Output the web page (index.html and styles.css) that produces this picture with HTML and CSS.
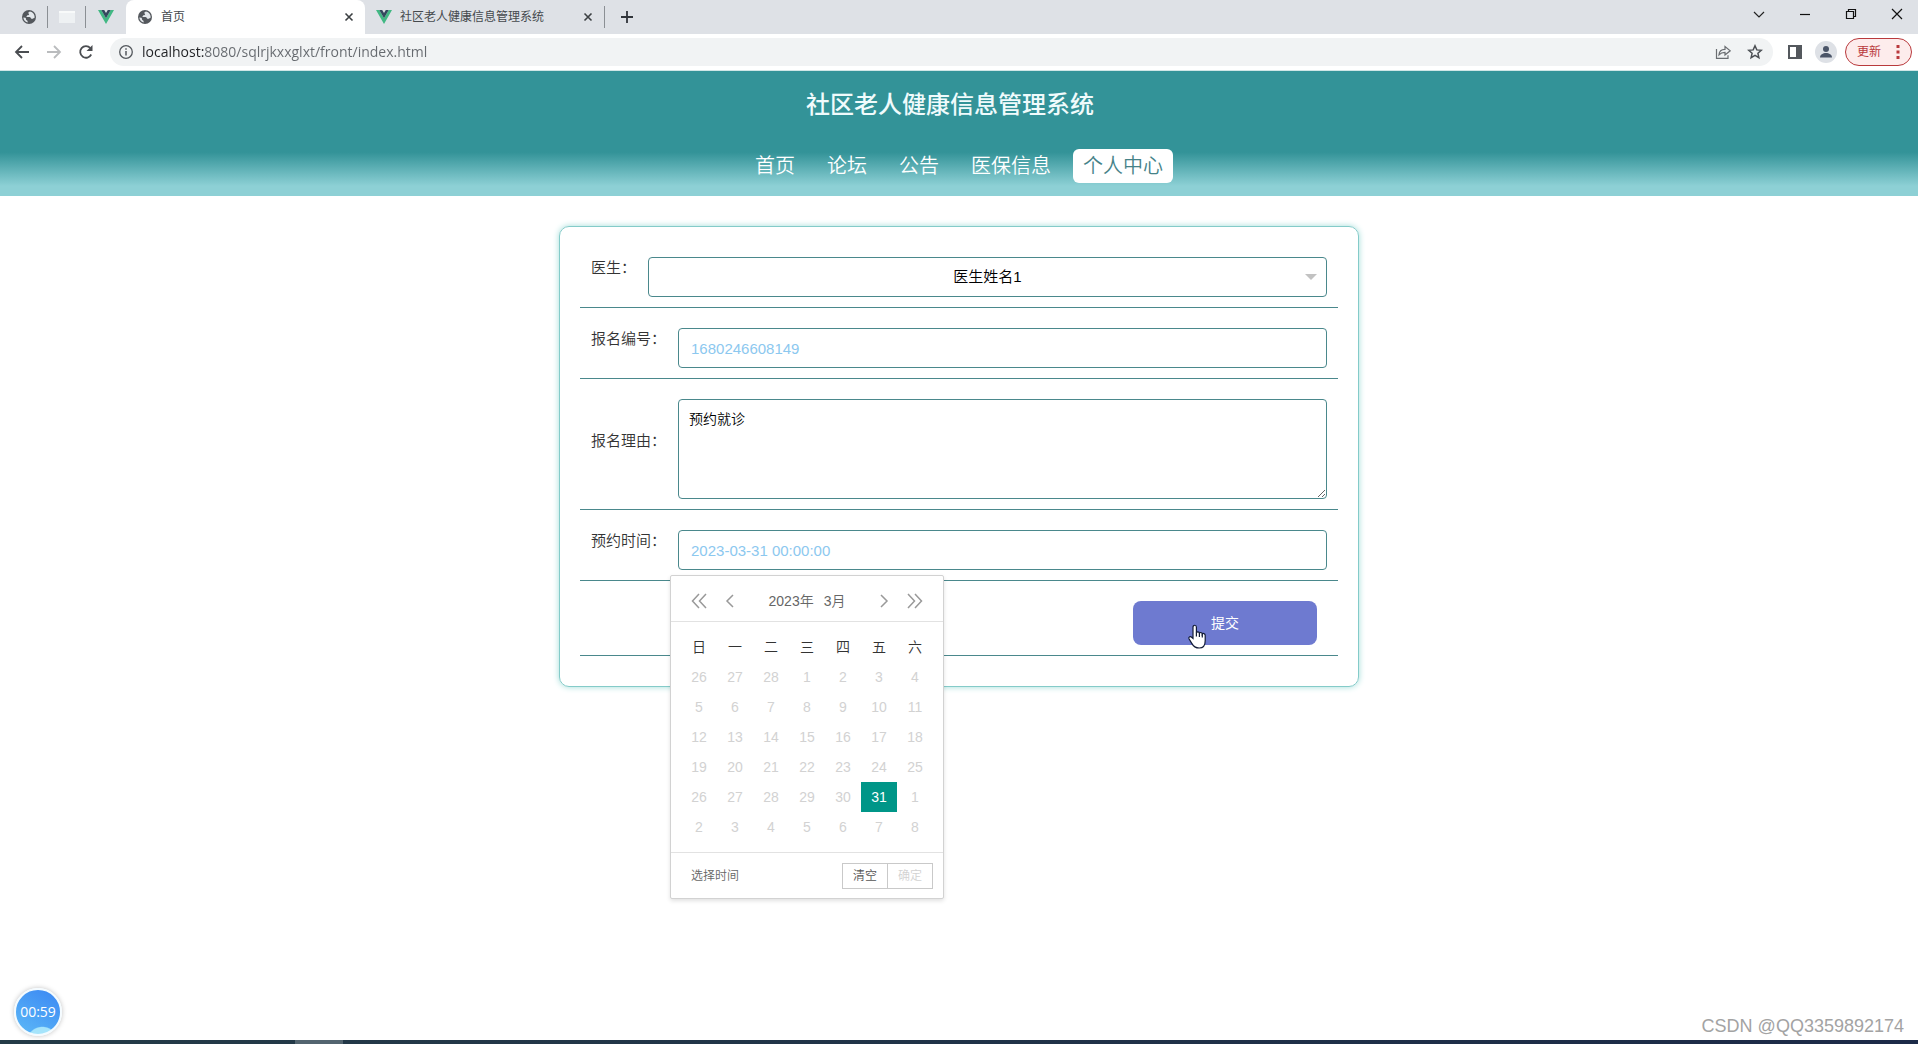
FILE: index.html
```html
<!DOCTYPE html>
<html lang="zh-CN">
<head>
<meta charset="utf-8">
<meta name="viewport" content="width=device-width, initial-scale=1">
<title>首页</title>
<link rel="stylesheet" href="styles.css">
</head>
<body>
<svg class="defs" width="0" height="0" aria-hidden="true">
  <symbol id="globe" viewBox="0 0 16 16">
    <circle cx="8" cy="8" r="7" fill="#54585d"/>
    <path d="M9 2.4c-1.600 .3-2.200 1.600-1.200 2.400.9.800-.2 1.500-1.300 1.500-.9 0-.3 1.500-1.400 1.700h3.400c1.500 0 1 1.900 2.500 1.900.9 0 1.100-.9 2.500-.8A5.800 5.800 0 0 0 9 2.400zM2.300 8.500c.3 2.400 1.900 4.400 4.300 5.100.2-1.300-.1-1.900-1-2.300-1-.5-.2-2-1.200-2.500z" fill="#e4e8ec"/>
  </symbol>
  <symbol id="vue" viewBox="0 0 16 16">
    <path d="M0 1h3.300L8 9.200 12.700 1H16L8 15z" fill="#41b883"/>
    <path d="M3.300 1h2.900L8 4.100 9.800 1h2.900L8 9.200z" fill="#34495e"/>
  </symbol>
  <symbol id="cross" viewBox="0 0 16 16">
    <path d="M4.500 4.500l7 7m0-7l-7 7" stroke="#3c4043" stroke-width="1.600" fill="none"/>
  </symbol>
</svg>

<header class="browser">
  <div class="tabs">
    <div class="pin"><svg class="i16"><use href="#globe"/></svg></div>
    <div class="pin"><svg class="i16" viewBox="0 0 16 16"><path d="M0 2h16v12H0z" fill="#eef1f3"/><path d="M0 2h16v2H0z" fill="#f8fafa"/></svg></div>
    <div class="pin last"><svg class="i16"><use href="#vue"/></svg></div>
    <div class="tab active">
      <svg class="i16"><use href="#globe"/></svg>
      <span class="name">首页</span>
      <button class="plain" aria-label="关闭"><svg class="i16"><use href="#cross"/></svg></button>
    </div>
    <div class="tab">
      <svg class="i16"><use href="#vue"/></svg>
      <span class="name">社区老人健康信息管理系统</span>
      <button class="plain" aria-label="关闭"><svg class="i16"><use href="#cross"/></svg></button>
    </div>
    <button class="plain new-tab" aria-label="新标签页"><svg class="i16" viewBox="0 0 16 16"><path d="M8 2v12M2 8h12" stroke="#30343a" stroke-width="1.800"/></svg></button>
    <div class="window-buttons">
      <button class="plain" aria-label="搜索标签页"><svg class="i16" viewBox="0 0 16 16"><path d="M3 6l5 5 5-5" fill="none" stroke="#222" stroke-width="1.200"/></svg></button>
      <button class="plain" aria-label="最小化"><svg class="i16" viewBox="0 0 16 16"><path d="M3 8.500h10" stroke="#111" stroke-width="1.200"/></svg></button>
      <button class="plain" aria-label="还原"><svg class="i16" viewBox="0 0 16 16"><path d="M3.500 5.500h7v7h-7zM5.500 5.500v-2h7v7h-2" fill="none" stroke="#111" stroke-width="1.200"/></svg></button>
      <button class="plain" aria-label="关闭窗口"><svg class="i16" viewBox="0 0 16 16"><path d="M3 3l10 10M13 3L3 13" stroke="#111" stroke-width="1.200"/></svg></button>
    </div>
  </div>
  <div class="toolbar">
    <button class="plain" aria-label="后退"><svg class="i16" viewBox="0 0 16 16"><path d="M15 8H2M8 2L2 8l6 6" fill="none" stroke="#4a4d51" stroke-width="1.800"/></svg></button>
    <button class="plain" aria-label="前进"><svg class="i16" viewBox="0 0 16 16"><path d="M1 8h13M8 2l6 6-6 6" fill="none" stroke="#babcbe" stroke-width="1.800"/></svg></button>
    <button class="plain" aria-label="重新加载"><svg class="i16" viewBox="0 0 16 16"><path d="M13.200 10.500A5.800 5.800 0 1 1 12.300 4" fill="none" stroke="#4a4d51" stroke-width="1.800"/><path d="M14.500 1v6h-6z" fill="#4a4d51"/></svg></button>
    <div class="address">
      <svg class="i16" viewBox="0 0 16 16"><circle cx="8" cy="8" r="6.300" fill="none" stroke="#54585d" stroke-width="1.300"/><path d="M8 7v4.500M8 4.300v1.500" stroke="#54585d" stroke-width="1.500"/></svg>
      <input class="url" type="text" aria-label="地址" value="localhost:8080/sqlrjkxxglxt/front/index.html">
      <button class="plain" aria-label="分享"><svg class="i16" viewBox="0 0 16 16"><path d="M1.500 5v9.300h11.500v-3" fill="none" stroke="#6a6d71" stroke-width="1.200"/><path d="M4 10.800c.2-3.600 2.500-5.400 6-5.500V2.500l5.200 4.300-5.200 4.200V8.300c-2.700 0-4.500.7-6 2.500z" fill="none" stroke="#6a6d71" stroke-width="1.200"/></svg></button>
      <button class="plain" aria-label="收藏"><svg class="i16" viewBox="0 0 16 16"><path d="M8 1.800l1.800 4.100 4.500.4-3.400 3 1 4.400L8 11.400l-3.900 2.300 1-4.400-3.400-3 4.500-.4z" fill="none" stroke="#4c4f54" stroke-width="1.500"/></svg></button>
    </div>
    <button class="plain" aria-label="侧边栏"><svg class="i16" viewBox="0 0 16 16"><path d="M1 1h14v14H1zM3 3v10h6V3z" fill="#54585d" fill-rule="evenodd"/></svg></button>
    <button class="plain avatar" aria-label="用户"><svg class="i16" viewBox="0 0 16 16"><circle cx="8" cy="5" r="3" fill="#4b5568"/><path d="M2 13.500c0-6 12-6 12 0z" fill="#4b5568"/></svg></button>
    <button class="update">更新<svg width="4" height="14" viewBox="0 0 4 14"><path d="M.5 0h3v3h-3zM.5 5.500h3v3h-3zM.5 11h3v3h-3z" fill="#b9393c"/></svg></button>
  </div>
</header>

<main class="page">
  <div class="banner">
    <h1>社区老人健康信息管理系统</h1>
    <nav>
      <a href="#home">首页</a>
      <a href="#forum">论坛</a>
      <a href="#notice">公告</a>
      <a href="#insurance">医保信息</a>
      <a href="#center" class="current">个人中心</a>
    </nav>
  </div>

  <form class="card">
    <div class="row">
      <label for="doctor">医生：</label>
      <div class="field">
        <select id="doctor"><option>医生姓名1</option></select>
        <svg class="caret" width="12" height="6" viewBox="0 0 12 6"><path d="M0 0h12L6 6z" fill="#c2c2c2"/></svg>
      </div>
    </div>
    <div class="row">
      <label for="number">报名编号：</label>
      <div class="field"><input id="number" type="text" value="1680246608149"></div>
    </div>
    <div class="row middle">
      <label for="reason">报名理由：</label>
      <div class="field"><textarea id="reason">预约就诊</textarea></div>
    </div>
    <div class="row">
      <label for="time">预约时间：</label>
      <div class="field">
        <input id="time" type="text" value="2023-03-31 00:00:00">
        <section class="calendar" aria-label="日期选择">
          <div class="cal-head">
            <button type="button" class="plain" aria-label="上一年"><svg class="i16" viewBox="0 0 16 16"><path d="M8 1L1.500 8 8 15M15 1L8.500 8l6.500 7" fill="none" stroke="#999" stroke-width="1.500"/></svg></button>
            <button type="button" class="plain" aria-label="上一月"><svg class="i16" viewBox="0 0 16 16"><path d="M11 2L5 8l6 6" fill="none" stroke="#999" stroke-width="1.500"/></svg></button>
            <div class="month"><span>2023年</span><span>3月</span></div>
            <button type="button" class="plain" aria-label="下一月"><svg class="i16" viewBox="0 0 16 16"><path d="M5 2l6 6-6 6" fill="none" stroke="#999" stroke-width="1.500"/></svg></button>
            <button type="button" class="plain" aria-label="下一年"><svg class="i16" viewBox="0 0 16 16"><path d="M1 1l6.500 7L1 15M8 1l6.500 7L8 15" fill="none" stroke="#999" stroke-width="1.500"/></svg></button>
          </div>
          <div class="cal-body">
            <table>
              <thead><tr><th>日</th><th>一</th><th>二</th><th>三</th><th>四</th><th>五</th><th>六</th></tr></thead>
              <tbody>
                <tr><td>26</td><td>27</td><td>28</td><td>1</td><td>2</td><td>3</td><td>4</td></tr>
                <tr><td>5</td><td>6</td><td>7</td><td>8</td><td>9</td><td>10</td><td>11</td></tr>
                <tr><td>12</td><td>13</td><td>14</td><td>15</td><td>16</td><td>17</td><td>18</td></tr>
                <tr><td>19</td><td>20</td><td>21</td><td>22</td><td>23</td><td>24</td><td>25</td></tr>
                <tr><td>26</td><td>27</td><td>28</td><td>29</td><td>30</td><td class="chosen">31</td><td>1</td></tr>
                <tr><td>2</td><td>3</td><td>4</td><td>5</td><td>6</td><td>7</td><td>8</td></tr>
              </tbody>
            </table>
          </div>
          <div class="cal-foot">
            <button type="button" class="plain pick">选择时间</button>
            <div class="pair">
              <button type="button">清空</button>
              <button type="button" disabled>确定</button>
            </div>
          </div>
        </section>
      </div>
    </div>
    <div class="row end">
      <button type="button" class="submit">提交
        <svg class="pointer" width="20" height="26" viewBox="0 0 20 26"><path d="M6 14.500V3.200c0-2.600 3.400-2.600 3.400 0v5.600c.2-1.300 2.900-1.200 3 .4.400-1.100 2.900-.9 2.900.8.500-.9 2.900-.7 2.900 1.300v5.400c0 3.900-1.900 7.300-6 7.300-4.200 0-5.900-1.800-7.600-4.900L2 14.800c-.8-2.100 1.700-2.800 2.700-1.500z" fill="#fff" stroke="#111a35" stroke-width="1.200"/><path d="M9.400 8.500v4M12.400 9v4M15.300 10v3.500" stroke="#111a35" stroke-width="1.200"/></svg>
      </button>
    </div>
  </form>
</main>

<div class="recorder">00:59</div>
<div class="watermark">CSDN @QQ3359892174</div>
<div class="taskbar"><div class="task"></div></div>
</body>
</html>
```
FILE: styles.css
```css
* { box-sizing: border-box; }

body {
  margin: 0;
  min-height: 100vh;
  display: flex;
  flex-direction: column;
  position: relative;
  background: #fff;
  color: #333;
  font: 14px/20px "Liberation Sans", "Noto Sans CJK SC", sans-serif;
}

button, input, select, textarea { font: inherit; margin: 0; }
svg { display: block; flex: none; }
.defs { position: absolute; }
.i16 { width: 16px; height: 16px; }
.plain { border: 0; padding: 0; background: none; color: inherit; }

/* browser window */
.browser { border-bottom: 1px solid #cfe6e6; }

.tabs {
  display: flex;
  height: 34px;
  background: #dee1e6;
  padding-left: 10px;
}
.pin {
  display: flex;
  align-items: center;
  justify-content: center;
  width: 38px;
  margin: 6px 0;
  border-right: 1px solid #8b8f94;
}
.pin.last { width: 40px; border-right: 0; }
.tab {
  display: flex;
  align-items: center;
  gap: 8px;
  width: 239px;
  padding: 0 8px 0 11px;
  font-size: 12px;
  color: #45494d;
}
.tab.active { background: #fff; border-radius: 8px 8px 0 0; }
.name { flex: 1; white-space: nowrap; }
.new-tab {
  margin: 6px 0;
  padding-left: 14px;
  border-left: 1px solid #8b8f94;
}
.window-buttons {
  display: flex;
  align-items: center;
  gap: 30px;
  height: 28px;
  margin-left: auto;
  padding-right: 13px;
}

.toolbar {
  display: flex;
  align-items: center;
  gap: 16px;
  height: 36px;
  padding: 0 6px 0 14px;
}
.address {
  display: flex;
  align-items: center;
  flex: 1;
  gap: 16px;
  height: 28px;
  margin-right: -2px;
  padding: 0 10px 0 8px;
  border-radius: 14px;
  background: #f1f3f4;
}
.address .url {
  flex: 1;
  min-width: 0;
  margin-left: -8px;
  border: 0;
  padding: 0;
  font: 14px/20px "Open Sans", sans-serif;
  color: transparent;
  background: linear-gradient(to right, #202124 62px, #65696e 62px);
  -webkit-background-clip: text;
  background-clip: text;
}
.avatar {
  padding: 3px;
  border-radius: 50%;
  background: #dee1e6;
  margin: 0 -8px 0 -4px;
}
.update {
  display: flex;
  align-items: center;
  justify-content: space-between;
  width: 67px;
  height: 28px;
  padding: 0 11px;
  border: 1px solid #b9393c;
  border-radius: 14px;
  background: #fdecec;
  color: #b9393c;
  font-size: 12px;
}

/* site */
.page { flex: 1; }

.banner {
  display: flex;
  flex-direction: column;
  align-items: center;
  gap: 26px;
  padding: 15px 0 13px;
  background: linear-gradient(to bottom, #339398 65%, #8dd0d5 92%);
}
.banner h1 {
  margin: 0;
  padding-right: 18px;
  font-size: 24px;
  line-height: 37px;
  font-weight: 500;
  color: #f0fbfc;
}
nav { display: flex; gap: 12px; }
nav a {
  padding: 0 10px;
  border-radius: 6px;
  font-size: 20px;
  line-height: 34px;
  font-weight: 350;
  color: #fff;
  text-decoration: none;
}
nav a.current { background: #fff; color: #458288; }

.card {
  width: 100%;
  max-width: 800px;
  margin: 30px auto;
  padding: 10px 20px 30px;
  border: 1px solid #84cbc9;
  border-radius: 10px;
  box-shadow: 0 0 6px #9fdcd8;
}
.row {
  display: flex;
  gap: 12px;
  padding: 20px 11px 10px;
  border-bottom: 1px solid #4a888c;
}
.row label { font-size: 15px; line-height: 22px; font-weight: 350; }
.row.middle label { align-self: center; padding-bottom: 16px; }
.row.end { justify-content: flex-end; padding-right: 21px; }
.field { flex: 1; position: relative; }
.field > input, select, textarea {
  display: block;
  width: 100%;
  height: 40px;
  padding: 0 12px;
  border: 1px solid #4a888c;
  border-radius: 4px;
  background: #fff;
  outline: 0;
  font-size: 15px;
}
.field > input { color: #8cc8ef; }
select {
  appearance: none;
  text-align: center;
  text-align-last: center;
  font-weight: 350;
  color: #000;
}
.caret { position: absolute; right: 10px; top: 17px; }
textarea {
  height: 100px;
  padding: 10px;
  font-size: 14px;
  line-height: 18px;
  font-weight: 350;
  color: #000;
}
.submit {
  position: relative;
  width: 184px;
  height: 44px;
  border: 0;
  border-radius: 8px;
  background: #6e7ad0;
  color: #fff;
  font-size: 14px;
}
.pointer { position: absolute; left: 54px; top: 23px; }

/* date picker */
.calendar {
  position: absolute;
  z-index: 2;
  left: -8px;
  top: 45px;
  border: 1px solid #d2d2d2;
  border-radius: 2px;
  background: #fff;
  box-shadow: 0 2px 4px rgba(0, 0, 0, .12);
  color: #666;
  font-weight: 350;
}
.cal-head {
  display: flex;
  align-items: center;
  gap: 15px;
  height: 46px;
  padding: 5px 20px 0;
  border-bottom: 1px solid #e2e2e2;
}
.month { flex: 1; display: flex; justify-content: center; gap: 10px; }
.cal-body { padding: 10px; }
table { border-collapse: collapse; table-layout: fixed; width: 252px; }
th, td { height: 30px; padding: 0; text-align: center; font-weight: 350; }
th { color: #333; }
td { color: #d2d2d2; }
td.chosen { background: #009688; color: #fff; }
.cal-foot {
  display: flex;
  align-items: center;
  justify-content: space-between;
  height: 46px;
  padding: 0 10px 0 20px;
  border-top: 1px solid #e2e2e2;
  font-size: 12px;
}
.pair { display: flex; }
.pair button {
  width: 46px;
  height: 26px;
  padding: 0;
  border: 1px solid #c9c9c9;
  background: #fff;
  color: #555;
}
.pair button + button { margin-left: -1px; }
.pair button:disabled { color: #d2d2d2; }

/* screen overlays */
.recorder {
  position: absolute;
  left: 14px;
  bottom: 8px;
  width: 48px;
  height: 48px;
  border: 2px solid #f4fbff;
  border-radius: 50%;
  background: radial-gradient(circle at 60% 120%, #a5e4fb 26%, transparent 28%), linear-gradient(30deg, #5cb9f7, #3b87f3);
  box-shadow: 0 0 5px rgba(0, 0, 0, .25);
  color: #fff;
  font: 14px/44px "Open Sans", sans-serif;
  text-align: center;
}
.watermark {
  position: absolute;
  right: 14px;
  bottom: 8px;
  font-size: 18px;
  color: #a3a3a3;
}
.taskbar {
  height: 4px;
  padding-left: 295px;
  background: linear-gradient(to right, #243b47, #1c2a48);
}
.task { width: 48px; height: 4px; background: #53646f; }
```
